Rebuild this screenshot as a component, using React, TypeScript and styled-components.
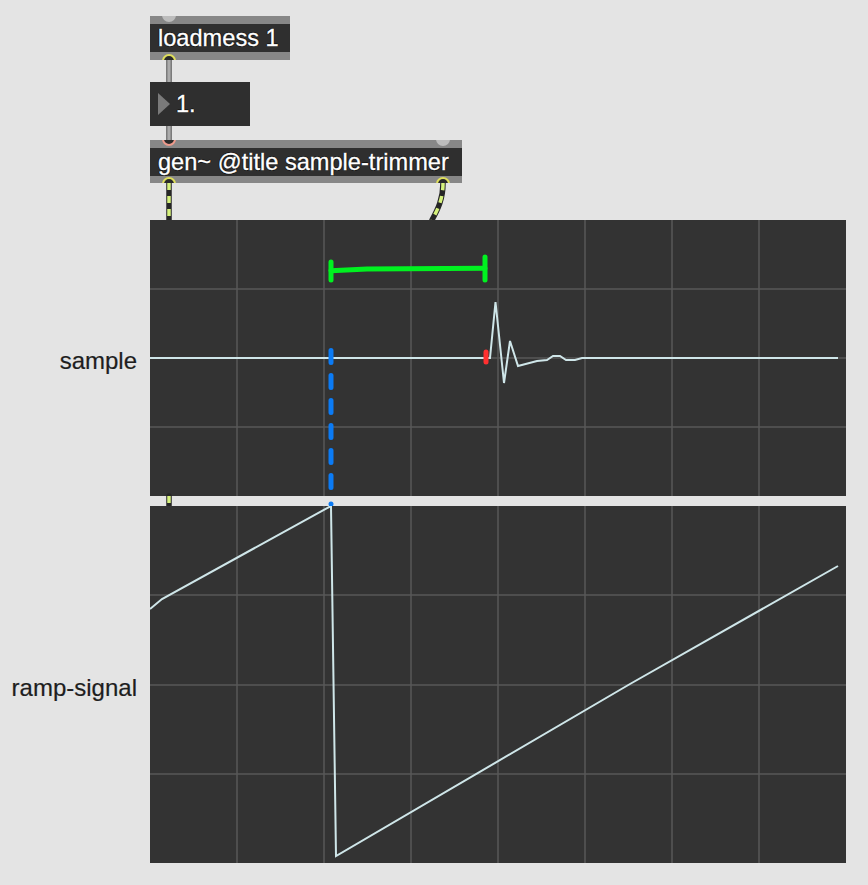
import React from 'react';
import styled, { createGlobalStyle } from 'styled-components';

const GlobalStyle = createGlobalStyle`
  html, body {
    margin: 0;
    padding: 0;
    background: #e4e4e4;
  }
  body {
    font-family: 'Liberation Sans', Arial, sans-serif;
  }
`;

const Patch = styled.div`
  display: grid;
  grid-template-columns: 150px 696px;
  align-content: start;
  padding-top: 16px;
  width: 868px;
  height: 885px;
  box-sizing: border-box;
`;

const Label = styled.div`
  grid-column: 1;
  display: flex;
  align-items: center;
  justify-content: flex-end;
  padding: 6px 13px 0 0;
  font-size: 24px;
  color: #1e1e1e;
  -webkit-text-stroke: 0.2px #1e1e1e;
`;

const ObjBox = styled.div<{ $w: number }>`
  grid-column: 2;
  width: ${(p) => p.$w}px;
  display: flex;
  flex-direction: column;
`;

const Strip = styled.div<{ $h: number }>`
  position: relative;
  overflow: hidden;
  height: ${(p) => p.$h}px;
  background: #878787;
`;

const Body = styled.div<{ $h?: number }>`
  height: ${(p) => p.$h ?? 28}px;
  line-height: ${(p) => p.$h ?? 28}px;
  padding-left: 8px;
  background: #2f2f2f;
  color: #fff;
  font-size: 23.6px;
  white-space: nowrap;
  -webkit-text-stroke: 0.3px #fff;
  text-shadow: -1px 0 #151515, 1px 0 #151515, 0 -1px #151515, 0 1px #151515;
`;

const Port = styled.div<{ $x: number; $edge: 'top' | 'bottom'; $kind: 'plain' | 'hot' | 'out' }>`
  position: absolute;
  left: ${(p) => p.$x - 7}px;
  ${(p) => (p.$edge === 'top' ? 'top: -8px;' : 'bottom: -8px;')}
  width: 14px;
  height: 14px;
  border-radius: 50%;
  box-sizing: border-box;
  background: ${(p) => (p.$kind === 'plain' ? '#bcbcbc' : '#2a2a2a')};
  border: ${(p) =>
    p.$kind === 'hot' ? '2px solid #ee9a8c' : p.$kind === 'out' ? '2px solid #dede5c' : 'none'};
`;

const NumBox = styled.div`
  grid-column: 2;
  width: 100px;
  height: 44px;
  display: flex;
  align-items: center;
  gap: 6px;
  padding-left: 8px;
  box-sizing: border-box;
  background: #2f2f2f;
  color: #fff;
  font-size: 23.6px;
  -webkit-text-stroke: 0.3px #fff;
  text-shadow: -1px 0 #151515, 1px 0 #151515, 0 -1px #151515, 0 1px #151515;
`;

const Triangle = styled.span`
  width: 0;
  height: 0;
  border-left: 12px solid #7a7a7a;
  border-top: 11px solid transparent;
  border-bottom: 11px solid transparent;
`;

const CordRow = styled.svg`
  grid-column: 2;
  display: block;
  overflow: visible;
`;

const Scope = styled.div<{ $h: number }>`
  grid-column: 2;
  width: 696px;
  height: ${(p) => p.$h}px;
  background: #333333;
`;

const ScopeSvg = styled.svg`
  display: block;
`;

const W = 696;

const ControlCord = ({ d }: { d: string }) => (
  <>
    <path d={d} stroke="#7b7b7b" strokeWidth={6} fill="none" />
    <path d={d} stroke="#ababab" strokeWidth={3} fill="none" />
  </>
);

const SignalCord = ({ d }: { d: string }) => (
  <>
    <path d={d} stroke="#262626" strokeWidth={5.5} fill="none" strokeLinecap="round" />
    <path d={d} stroke="#d6f27c" strokeWidth={3.5} strokeDasharray="7 6" fill="none" />
  </>
);

const Grid = ({ h }: { h: number }) => {
  const cols = [1, 2, 3, 4, 5, 6, 7].map((k) => k * 87);
  const rows = [1, 2, 3].map((k) => Math.round((k * h) / 4));
  return (
    <g stroke="#585858" strokeWidth={1.5}>
      {cols.map((x) => (
        <line key={'c' + x} x1={x} y1={0} x2={x} y2={h} />
      ))}
      {rows.map((y) => (
        <line key={'r' + y} x1={0} y1={y} x2={W} y2={y} />
      ))}
    </g>
  );
};

const sampleWave =
  'M0 138 L340 138 L345.5 82 L354 163 L360 121 L368 146 L387 141 L397 140 L403 136 L410 136 L416 140 L425 140 L432 138 L688 138';

const rampWave = 'M0 103 L12 93 L180 0.5 L181 0.5 L186 350 L480 178 L688 60';

export default function App() {
  return (
    <>
      <GlobalStyle />
      <Patch>
        <ObjBox $w={140}>
          <Strip $h={8}>
            <Port $x={19} $edge="top" $kind="plain" />
          </Strip>
          <Body>loadmess 1</Body>
          <Strip $h={8}>
            <Port $x={19} $edge="bottom" $kind="out" />
          </Strip>
        </ObjBox>

        <CordRow width={W} height={22}>
          <ControlCord d="M19 0 L19 22" />
        </CordRow>

        <NumBox>
          <Triangle />
          <span>1.</span>
        </NumBox>

        <CordRow width={W} height={14}>
          <ControlCord d="M19 0 L19 14" />
        </CordRow>

        <ObjBox $w={312}>
          <Strip $h={8}>
            <Port $x={19} $edge="top" $kind="hot" />
            <Port $x={293} $edge="top" $kind="plain" />
          </Strip>
          <Body>gen~ @title sample-trimmer</Body>
          <Strip $h={7}>
            <Port $x={19} $edge="bottom" $kind="out" />
            <Port $x={293} $edge="bottom" $kind="out" />
          </Strip>
        </ObjBox>

        <CordRow width={W} height={37}>
          <SignalCord d="M19 0 L19 37" />
          <SignalCord d="M293 0 C293 16 288 26 282 37" />
        </CordRow>

        <Label>sample</Label>
        <Scope $h={276}>
          <ScopeSvg width={W} height={276}>
            <Grid h={276} />
            <path d={sampleWave} stroke="#cfe6e9" strokeWidth={2} fill="none" strokeLinejoin="miter" />
            <path
              d="M181 50.7 L217 49 L335 48.3"
              stroke="#00f220"
              strokeWidth={5}
              fill="none"
              strokeLinecap="round"
            />
            <line x1={181} y1={42} x2={181} y2={60} stroke="#00f220" strokeWidth={5} strokeLinecap="round" />
            <line x1={335} y1={37} x2={335} y2={60} stroke="#00f220" strokeWidth={5} strokeLinecap="round" />
            <line
              x1={181}
              y1={130.5}
              x2={181}
              y2={273}
              stroke="#0b7bf5"
              strokeWidth={5}
              strokeDasharray="12 13"
              strokeLinecap="round"
            />
            <line x1={336} y1={132} x2={336} y2={142} stroke="#ff3030" strokeWidth={5} strokeLinecap="round" />
          </ScopeSvg>
        </Scope>

        <CordRow width={W} height={10}>
          <SignalCord d="M19 0 L19 10" />
          <circle cx={181} cy={8} r={2.5} fill="#0b7bf5" />
        </CordRow>

        <Label>ramp-signal</Label>
        <Scope $h={357}>
          <ScopeSvg width={W} height={357}>
            <Grid h={357} />
            <path d={rampWave} stroke="#cfe6e9" strokeWidth={2} fill="none" />
          </ScopeSvg>
        </Scope>
      </Patch>
    </>
  );
}
